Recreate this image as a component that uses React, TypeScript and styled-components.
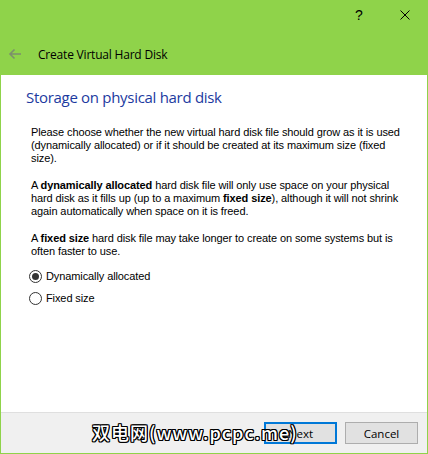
import React from "react";
import styled, { createGlobalStyle } from "styled-components";

const Global = createGlobalStyle`
  html, body { margin: 0; padding: 0; background: #ffffff; }
  body { font-family: "Liberation Sans", Arial, sans-serif; }
`;

const GREEN = "#8fd34a";

const Window = styled.div`
  position: relative;
  width: 428px;
  height: 454px;
  box-sizing: border-box;
  display: flex;
  flex-direction: column;
  border: 1px solid ${GREEN};
  border-top: none;
  background: #ffffff;
  overflow: hidden;
`;

const TitleBar = styled.div`
  height: 75px;
  flex: none;
  margin: 0 -1px;
  background: ${GREEN};
  display: flex;
  flex-direction: column;
`;

const Controls = styled.div`
  display: flex;
  justify-content: flex-end;
  height: 30px;
`;

const CtrlButton = styled.div`
  width: 46px;
  height: 30px;
  display: flex;
  align-items: center;
  justify-content: center;
  color: #000;
  font-family: "Liberation Sans", Arial, sans-serif;
  font-size: 14px;
`;

const TitleRow = styled.div`
  display: flex;
  align-items: center;
  height: 30px;
  margin-top: 9px;
  padding-left: 8px;
`;

const BackIcon = styled.svg`
  width: 14px;
  height: 12px;
  margin-right: 16px;
`;

const TitleText = styled.span`
  font-family: "Open Sans", "Noto Sans", sans-serif;
  font-size: 12px;
  color: #000;
  letter-spacing: -0.2px;
`;

const Content = styled.div`
  flex: 1;
  padding: 12px 8px 0 25px;
`;

const Heading = styled.h1`
  margin: 0 0 19px 0;
  font-family: "Open Sans", "Noto Sans", sans-serif;
  font-weight: 400;
  font-size: 15px;
  line-height: 20px;
  color: #1c3aa0;
  letter-spacing: -0.3px;
`;

const Body = styled.div`
  padding-left: 5px;
  font-family: "Liberation Sans", Arial, sans-serif;
  font-size: 11px;
  line-height: 13px;
  letter-spacing: -0.1px;
  color: #000;
  white-space: nowrap;
`;

const Para = styled.p`
  margin: 0 0 14px 0;
`;

const RadioList = styled.div`
  display: flex;
  flex-direction: column;
  gap: 9px;
  margin-top: -2px;
  margin-left: -2px;
`;

const RadioRow = styled.label`
  display: flex;
  align-items: center;
  height: 13px;
  font-family: "Liberation Sans", Arial, sans-serif;
  font-size: 11px;
  color: #000;
`;

const RadioCircle = styled.span<{ $checked?: boolean }>`
  width: 13px;
  height: 13px;
  box-sizing: border-box;
  border-radius: 50%;
  border: 1px solid #333;
  background: #fff;
  margin-right: 4px;
  display: flex;
  align-items: center;
  justify-content: center;
  &::after {
    content: "";
    width: 7px;
    height: 7px;
    border-radius: 50%;
    background: #333;
    display: ${(p) => (p.$checked ? "block" : "none")};
  }
`;

const Footer = styled.div`
  flex: none;
  height: 41px;
  box-sizing: border-box;
  border-top: 1px solid #dfdfdf;
  background: #f0f0f0;
  display: flex;
  justify-content: flex-end;
  align-items: flex-start;
  padding: 9px 9px 0 0;
  gap: 8px;
`;

const Button = styled.button<{ $primary?: boolean }>`
  width: 73px;
  height: 22px;
  box-sizing: border-box;
  background: #e1e1e1;
  border: ${(p) => (p.$primary ? "2px solid #0078d7" : "1px solid #adadad")};
  font-family: "Open Sans", "Noto Sans", sans-serif;
  font-size: 11.5px;
  color: #000;
  padding: 0;
  display: flex;
  align-items: center;
  justify-content: center;
`;

const Watermark = styled.div`
  position: absolute;
  left: 91px;
  top: 419px;
  font-family: "Noto Sans CJK SC", "Liberation Sans", sans-serif;
  font-size: 18px;
  font-weight: 500;
  color: #fff;
  letter-spacing: 1px;
  white-space: nowrap;
  text-shadow: 1px 0 0 #000, -1px 0 0 #000, 0 1px 0 #000, 0 -1px 0 #000,
    1px 1px 0 #000, -1px -1px 0 #000, 1px -1px 0 #000, -1px 1px 0 #000;
`;

export default function App() {
  return (
    <>
      <Global />
      <Window>
        <TitleBar>
          <Controls>
            <CtrlButton>?</CtrlButton>
            <CtrlButton>
              <svg width="10" height="10" viewBox="0 0 10 10">
                <path d="M0.5 0.5 L9.5 9.5 M9.5 0.5 L0.5 9.5" stroke="#000" strokeWidth="1" />
              </svg>
            </CtrlButton>
          </Controls>
          <TitleRow>
            <BackIcon viewBox="0 0 14 12">
              <path d="M13 6 H2 M6.5 1.5 L2 6 L6.5 10.5" stroke="#7d8f6c" strokeWidth="1.6" fill="none" />
            </BackIcon>
            <TitleText>Create Virtual Hard Disk</TitleText>
          </TitleRow>
        </TitleBar>
        <Content>
          <Heading>Storage on physical hard disk</Heading>
          <Body>
            <Para>
              Please choose whether the new virtual hard disk file should grow as it is used
              <br />
              (dynamically allocated) or if it should be created at its maximum size (fixed
              <br />
              size).
            </Para>
            <Para>
              A <b>dynamically allocated</b> hard disk file will only use space on your physical
              <br />
              hard disk as it fills up (up to a maximum <b>fixed size</b>), although it will not
              shrink
              <br />
              again automatically when space on it is freed.
            </Para>
            <Para>
              A <b>fixed size</b> hard disk file may take longer to create on some systems but is
              <br />
              often faster to use.
            </Para>
            <RadioList>
              <RadioRow>
                <RadioCircle $checked />
                Dynamically allocated
              </RadioRow>
              <RadioRow>
                <RadioCircle />
                Fixed size
              </RadioRow>
            </RadioList>
          </Body>
        </Content>
        <Footer>
          <Button $primary>Next</Button>
          <Button>Cancel</Button>
        </Footer>
        <Watermark>双电网(www.pcpc.me)</Watermark>
      </Window>
    </>
  );
}
